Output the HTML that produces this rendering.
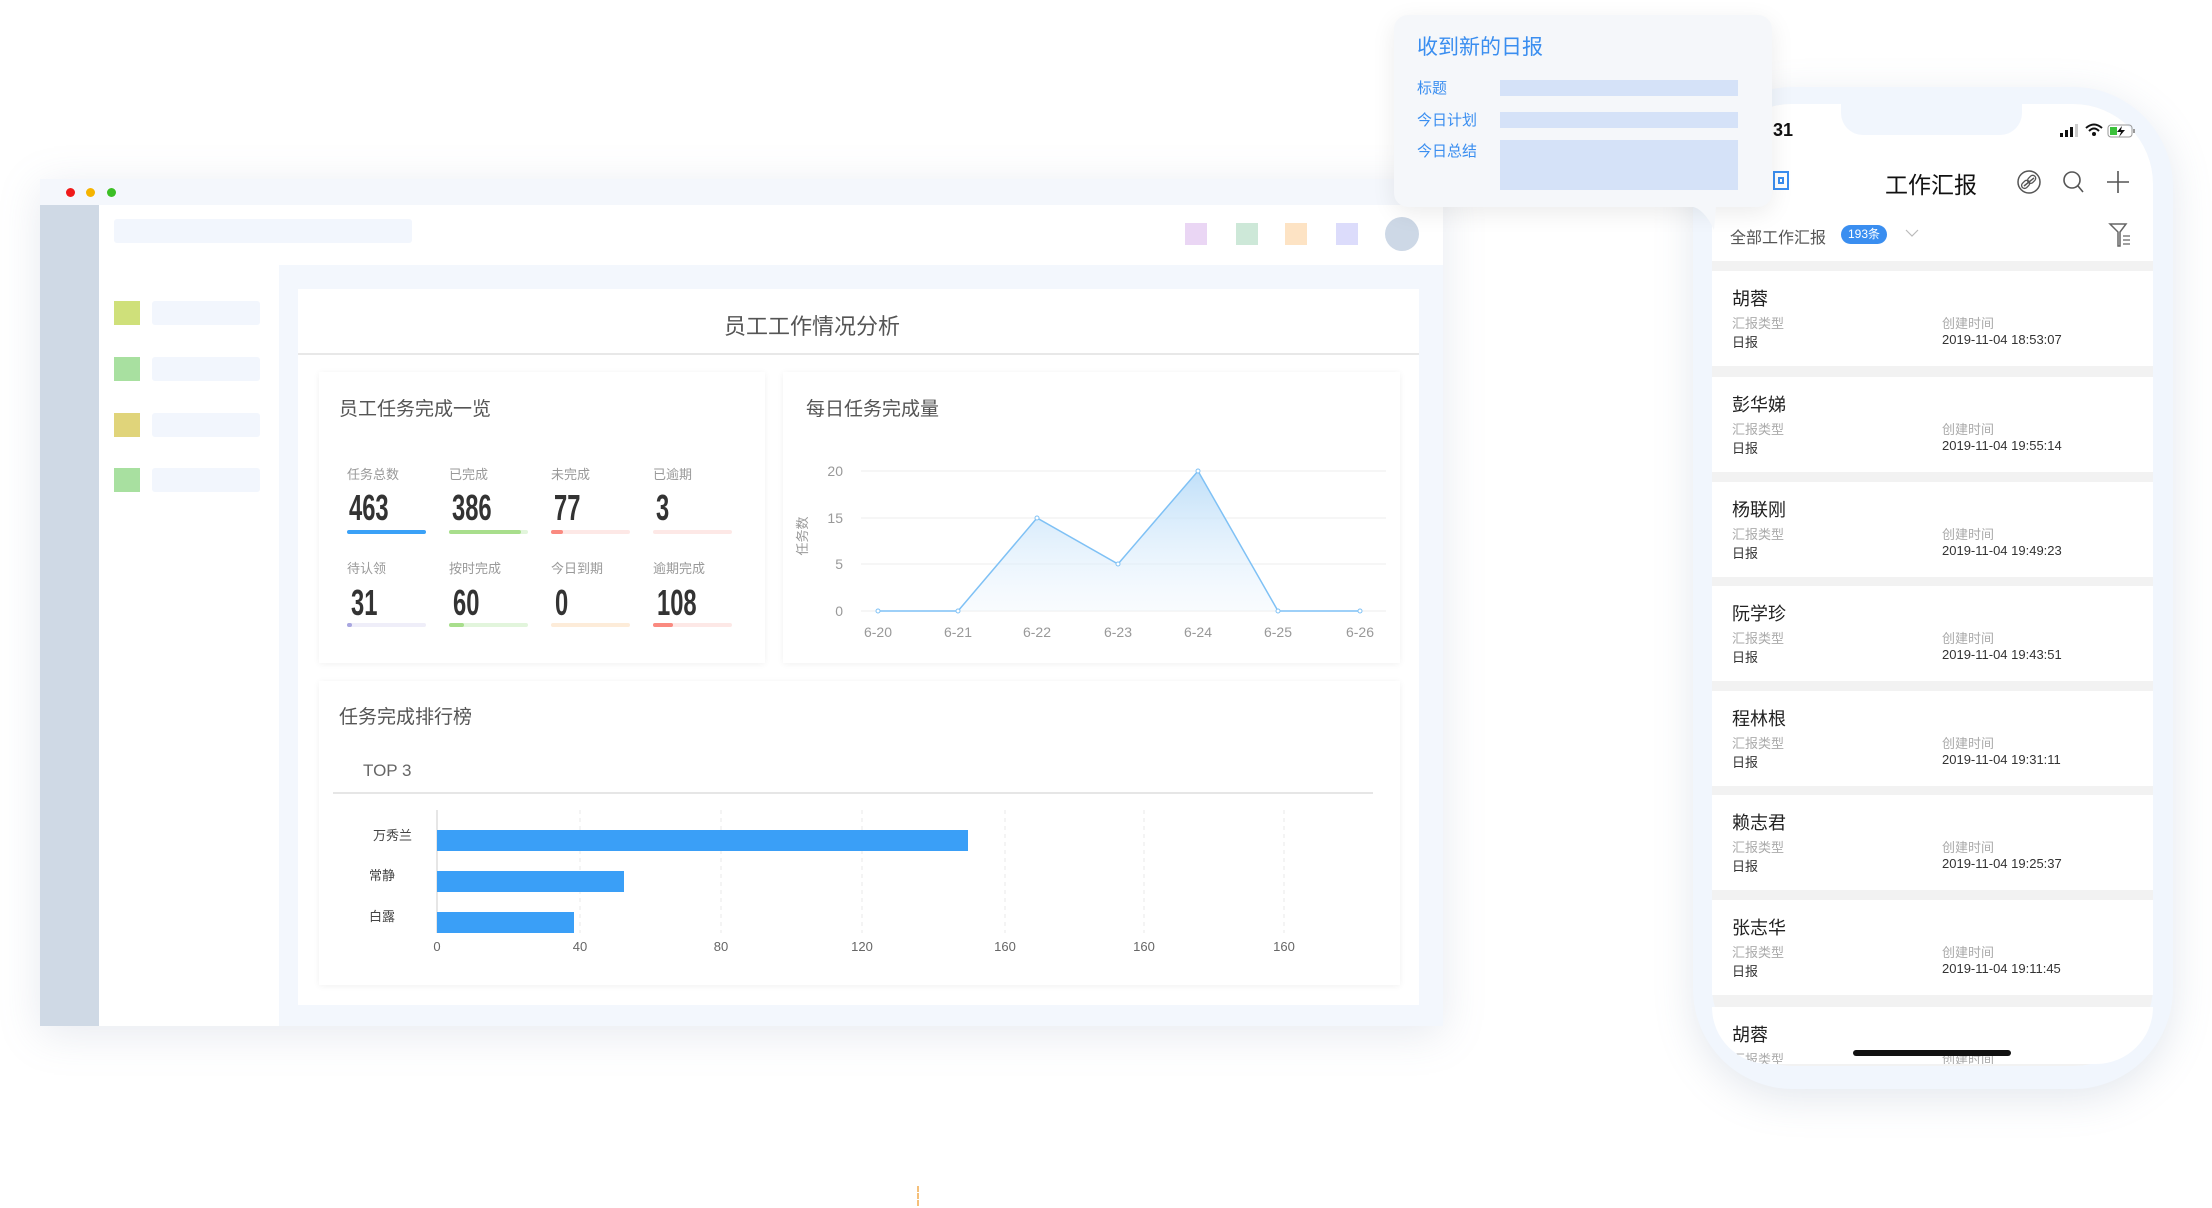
<!DOCTYPE html>
<html><head><meta charset="utf-8"><style>
*{margin:0;padding:0;box-sizing:border-box}
body{width:2212px;height:1208px;background:#fff;position:relative;overflow:hidden;font-family:"Liberation Sans","Noto Sans CJK SC",sans-serif}
.a{position:absolute}
.num{font-family:"Liberation Sans",sans-serif;font-weight:bold;color:#333;font-size:36px;line-height:1;transform:scaleX(0.66);transform-origin:left top}
.lbl{font-size:13px;color:#999}
.bar{height:4px;border-radius:2px}
.card{background:#fff;box-shadow:0 1px 6px rgba(0,0,0,0.06)}
.it{position:absolute;left:1712px;width:441px;height:95px;background:#fff}
.it .n{position:absolute;left:20px;top:14px;font-size:18px;color:#222}
.it .l1{position:absolute;left:20px;top:42px;font-size:13px;color:#aaa}
.it .l2{position:absolute;left:230px;top:42px;font-size:13px;color:#aaa}
.it .v1{position:absolute;left:20px;top:61px;font-size:13px;color:#333}
.it .v2{position:absolute;left:230px;top:61px;font-size:13px;color:#333}
</style></head><body>

<div class="a" style="left:40px;top:179px;width:1403px;height:847px;background:#fff;box-shadow:0 8px 40px rgba(120,140,170,0.18)">
 <div class="a" style="left:0;top:0;width:1403px;height:26px;background:#f4f7fc"></div>
 <div class="a" style="left:26px;top:9px;width:9px;height:9px;border-radius:50%;background:#f01a1a"></div>
 <div class="a" style="left:46px;top:9px;width:9px;height:9px;border-radius:50%;background:#f5b400"></div>
 <div class="a" style="left:67px;top:9px;width:9px;height:9px;border-radius:50%;background:#3cbf25"></div>
 <div class="a" style="left:0;top:26px;width:59px;height:821px;background:#cfd9e5"></div>
 <div class="a" style="left:74px;top:40px;width:298px;height:24px;border-radius:3px;background:#f2f6fd"></div>
 <div class="a" style="left:1145px;top:44px;width:22px;height:22px;background:#ead6f4"></div>
 <div class="a" style="left:1196px;top:44px;width:22px;height:22px;background:#cde8d8"></div>
 <div class="a" style="left:1245px;top:44px;width:22px;height:22px;background:#fde3c4"></div>
 <div class="a" style="left:1296px;top:44px;width:22px;height:22px;background:#dcdcfb"></div>
 <div class="a" style="left:1345px;top:38px;width:34px;height:34px;border-radius:50%;background:#cdd8e6"></div>
 <div class="a" style="left:74px;top:122px;width:26px;height:24px;background:#cfe07a"></div>
 <div class="a" style="left:112px;top:122px;width:108px;height:24px;border-radius:3px;background:#f2f6fd"></div>
 <div class="a" style="left:74px;top:178px;width:26px;height:24px;background:#a8e0a0"></div>
 <div class="a" style="left:112px;top:178px;width:108px;height:24px;border-radius:3px;background:#f2f6fd"></div>
 <div class="a" style="left:74px;top:234px;width:26px;height:24px;background:#e0d47a"></div>
 <div class="a" style="left:112px;top:234px;width:108px;height:24px;border-radius:3px;background:#f2f6fd"></div>
 <div class="a" style="left:74px;top:289px;width:26px;height:24px;background:#a8e0a0"></div>
 <div class="a" style="left:112px;top:289px;width:108px;height:24px;border-radius:3px;background:#f2f6fd"></div>
 <div class="a" style="left:239px;top:86px;width:1164px;height:761px;background:#f3f7fd"></div>
 <div class="a" style="left:258px;top:110px;width:1121px;height:716px;background:#fff"></div>
 <div class="a" style="left:258px;top:174px;width:1121px;height:2px;background:#e8e8e8"></div>
 <div class="a" style="left:684px;top:130px;font-size:22px;color:#555">员工工作情况分析</div>
</div>

<div class="a card" style="left:319px;top:372px;width:446px;height:291px"></div>
<div class="a" style="left:339px;top:394px;font-size:19px;color:#555">员工任务完成一览</div>
<div class="a lbl" style="left:347px;top:464px">任务总数</div>
<div class="a lbl" style="left:449px;top:464px">已完成</div>
<div class="a lbl" style="left:551px;top:464px">未完成</div>
<div class="a lbl" style="left:653px;top:464px">已逾期</div>
<div class="a num" style="left:349px;top:490px">463</div>
<div class="a num" style="left:452px;top:490px">386</div>
<div class="a num" style="left:554px;top:490px">77</div>
<div class="a num" style="left:656px;top:490px">3</div>
<div class="a bar" style="left:347px;top:530px;width:79px;background:#3aa1f7"></div>
<div class="a bar" style="left:449px;top:530px;width:79px;background:#e2f5dc"></div>
<div class="a bar" style="left:449px;top:530px;width:72px;background:#a8de8c"></div>
<div class="a bar" style="left:551px;top:530px;width:79px;background:#fde8e6"></div>
<div class="a bar" style="left:551px;top:530px;width:12px;background:#fa8a80"></div>
<div class="a bar" style="left:653px;top:530px;width:79px;background:#fde8e6"></div>
<div class="a lbl" style="left:347px;top:558px">待认领</div>
<div class="a lbl" style="left:449px;top:558px">按时完成</div>
<div class="a lbl" style="left:551px;top:558px">今日到期</div>
<div class="a lbl" style="left:653px;top:558px">逾期完成</div>
<div class="a num" style="left:351px;top:585px">31</div>
<div class="a num" style="left:453px;top:585px">60</div>
<div class="a num" style="left:555px;top:585px">0</div>
<div class="a num" style="left:657px;top:585px">108</div>
<div class="a bar" style="left:347px;top:623px;width:79px;background:#efeef9"></div>
<div class="a bar" style="left:347px;top:623px;width:5px;background:#a9a7e0"></div>
<div class="a bar" style="left:449px;top:623px;width:79px;background:#e2f5dc"></div>
<div class="a bar" style="left:449px;top:623px;width:15px;background:#a8de8c"></div>
<div class="a bar" style="left:551px;top:623px;width:79px;background:#fdecd9"></div>
<div class="a bar" style="left:653px;top:623px;width:79px;background:#fde8e6"></div>
<div class="a bar" style="left:653px;top:623px;width:20px;background:#fa8a80"></div>

<div class="a card" style="left:783px;top:372px;width:617px;height:291px"></div>
<div class="a" style="left:806px;top:394px;font-size:19px;color:#555">每日任务完成量</div>
<svg class="a" style="left:783px;top:372px" width="617" height="291">
 <defs><linearGradient id="g" x1="0" y1="0" x2="0" y2="1"><stop offset="0" stop-color="#b9dcf8" stop-opacity="0.9"/><stop offset="1" stop-color="#eaf4fd" stop-opacity="0.3"/></linearGradient></defs>
 <g stroke="#eee" stroke-width="1"><line x1="78" y1="99" x2="603" y2="99"/><line x1="78" y1="146" x2="603" y2="146"/><line x1="78" y1="192" x2="603" y2="192"/><line x1="78" y1="239" x2="603" y2="239"/></g>
 <g font-size="14" fill="#999" text-anchor="end"><text x="60" y="104">20</text><text x="60" y="151">15</text><text x="60" y="197">5</text><text x="60" y="244">0</text></g>
 <text x="24" y="164" font-size="13" fill="#999" transform="rotate(-90 24 164)" text-anchor="middle">任务数</text>
 <polygon points="95,239 175,239 254,146 335,192 415,99 495,239 577,239" fill="url(#g)"/>
 <polyline points="95,239 175,239 254,146 335,192 415,99 495,239 577,239" fill="none" stroke="#7fc1f5" stroke-width="1.5"/>
 <g fill="#fff" stroke="#7fc1f5"><circle cx="95" cy="239" r="2"/><circle cx="175" cy="239" r="2"/><circle cx="254" cy="146" r="2"/><circle cx="335" cy="192" r="2"/><circle cx="415" cy="99" r="2"/><circle cx="495" cy="239" r="2"/><circle cx="577" cy="239" r="2"/></g>
 <g font-size="14" fill="#999" text-anchor="middle"><text x="95" y="265">6-20</text><text x="175" y="265">6-21</text><text x="254" y="265">6-22</text><text x="335" y="265">6-23</text><text x="415" y="265">6-24</text><text x="495" y="265">6-25</text><text x="577" y="265">6-26</text></g>
</svg>

<div class="a card" style="left:319px;top:681px;width:1081px;height:304px"></div>
<div class="a" style="left:339px;top:702px;font-size:19px;color:#555">任务完成排行榜</div>
<div class="a" style="left:363px;top:761px;font-size:17px;color:#666">TOP 3</div>
<div class="a" style="left:333px;top:792px;width:1040px;height:2px;background:#e6e6e6"></div>
<svg class="a" style="left:319px;top:800px" width="1081" height="170">
 <g stroke="#e8e8e8" stroke-dasharray="4 4"><line x1="261" y1="10" x2="261" y2="133"/><line x1="402" y1="10" x2="402" y2="133"/><line x1="543" y1="10" x2="543" y2="133"/><line x1="686" y1="10" x2="686" y2="133"/><line x1="825" y1="10" x2="825" y2="133"/><line x1="965" y1="10" x2="965" y2="133"/></g>
 <line x1="118" y1="10" x2="118" y2="133" stroke="#ccc"/>
 <rect x="118" y="30" width="531" height="21" fill="#3a9ff7"/>
 <rect x="118" y="71" width="187" height="21" fill="#3a9ff7"/>
 <rect x="118" y="112" width="137" height="21" fill="#3a9ff7"/>
 <g font-size="13" fill="#444" text-anchor="end"><text x="93" y="40">万秀兰</text><text x="76" y="80">常静</text><text x="76" y="121">白露</text></g>
 <g font-size="13" fill="#666" text-anchor="middle"><text x="118" y="151">0</text><text x="261" y="151">40</text><text x="402" y="151">80</text><text x="543" y="151">120</text><text x="686" y="151">160</text><text x="825" y="151">160</text><text x="965" y="151">160</text></g>
</svg>

<div class="a" style="left:1693px;top:87px;width:480px;height:1002px;border-radius:100px;background:#f1f6fd;box-shadow:0 10px 40px rgba(120,140,170,0.2)"></div>
<div class="a" style="left:1712px;top:104px;width:441px;height:962px;border-radius:80px;background:#f2f2f2;overflow:hidden">
 <div class="a" style="left:0;top:0;width:441px;height:157px;background:#fff"></div>
 <div class="a" style="left:129px;top:0;width:181px;height:31px;background:#f1f6fd;border-radius:0 0 22px 22px"></div>
</div>
<div class="a" style="left:1773px;top:120px;font-size:18px;font-weight:bold;color:#111">31</div>
<svg class="a" style="left:2058px;top:122px" width="82" height="18">
 <rect x="2" y="11" width="3" height="4" fill="#111"/><rect x="7" y="8" width="3" height="7" fill="#111"/><rect x="12" y="5" width="3" height="10" fill="#111"/><rect x="17" y="2" width="3" height="13" fill="#ccc"/>
 <path d="M28 6 Q36 -1 44 6 M31 9 Q36 4 41 9" stroke="#111" stroke-width="2" fill="none"/><circle cx="36" cy="12" r="2" fill="#111"/>
 <rect x="50" y="3" width="24" height="12" rx="3" fill="none" stroke="#999"/><rect x="52" y="5" width="7" height="8" fill="#3cc13b"/><path d="M64 4 L59 10 H63 L61 15 L67 8 H63 Z" fill="#111"/><rect x="75" y="7" width="2" height="4" fill="#999"/>
</svg>
<div class="a" style="left:1773px;top:171px;width:16px;height:19px;border:2px solid #3a8ef0"><div class="a" style="left:3px;top:4px;width:6px;height:7px;border:2px solid #3a8ef0"></div></div>
<div class="a" style="left:1885px;top:166px;font-size:23px;color:#111">工作汇报</div>
<svg class="a" style="left:2015px;top:168px" width="120" height="30">
 <circle cx="14" cy="14" r="11" fill="none" stroke="#555" stroke-width="1.5"/>
 <path d="M9 18 L19 10" stroke="#555" stroke-width="1.5"/><rect x="8" y="12" width="6" height="9" rx="3" transform="rotate(45 11 16)" fill="none" stroke="#555" stroke-width="1.3"/><rect x="14" y="7" width="6" height="9" rx="3" transform="rotate(45 17 11)" fill="none" stroke="#555" stroke-width="1.3"/>
 <circle cx="57" cy="12" r="8" fill="none" stroke="#555" stroke-width="1.6"/><path d="M63 18 L68 24" stroke="#555" stroke-width="1.6"/>
 <path d="M103 3 V25 M92 14 H114" stroke="#555" stroke-width="1.6"/>
</svg>
<div class="a" style="left:1730px;top:224px;font-size:16px;color:#555">全部工作汇报</div>
<div class="a" style="left:1841px;top:225px;width:46px;height:19px;border-radius:10px;background:#3a8ef0;color:#fff;font-size:12px;text-align:center;line-height:19px">193条</div>
<svg class="a" style="left:1905px;top:228px" width="14" height="10"><path d="M1 2 L7 8 L13 2" fill="none" stroke="#bbb" stroke-width="1.2"/></svg>
<svg class="a" style="left:2108px;top:222px" width="26" height="26">
 <path d="M2 2 H18 L12 10 V24 H10 V10 Z" fill="none" stroke="#666" stroke-width="1.5"/><path d="M15 14 H22 M15 18 H22 M15 22 H22" stroke="#666" stroke-width="1.3"/>
</svg>

<div class="it" style="top:271px"><div class="n">胡蓉</div><div class="l1">汇报类型</div><div class="l2">创建时间</div><div class="v1">日报</div><div class="v2">2019-11-04 18:53:07</div></div>
<div class="it" style="top:377px"><div class="n">彭华娣</div><div class="l1">汇报类型</div><div class="l2">创建时间</div><div class="v1">日报</div><div class="v2">2019-11-04 19:55:14</div></div>
<div class="it" style="top:482px"><div class="n">杨联刚</div><div class="l1">汇报类型</div><div class="l2">创建时间</div><div class="v1">日报</div><div class="v2">2019-11-04 19:49:23</div></div>
<div class="it" style="top:586px"><div class="n">阮学珍</div><div class="l1">汇报类型</div><div class="l2">创建时间</div><div class="v1">日报</div><div class="v2">2019-11-04 19:43:51</div></div>
<div class="it" style="top:691px"><div class="n">程林根</div><div class="l1">汇报类型</div><div class="l2">创建时间</div><div class="v1">日报</div><div class="v2">2019-11-04 19:31:11</div></div>
<div class="it" style="top:795px"><div class="n">赖志君</div><div class="l1">汇报类型</div><div class="l2">创建时间</div><div class="v1">日报</div><div class="v2">2019-11-04 19:25:37</div></div>
<div class="it" style="top:900px"><div class="n">张志华</div><div class="l1">汇报类型</div><div class="l2">创建时间</div><div class="v1">日报</div><div class="v2">2019-11-04 19:11:45</div></div>
<div class="it" style="top:1007px;height:57px;border-radius:0 0 60px 60px;overflow:hidden"><div class="n">胡蓉</div><div class="l1">汇报类型</div><div class="l2">创建时间</div></div>
<div class="a" style="left:1853px;top:1050px;width:158px;height:6px;border-radius:3px;background:#111"></div>

<div class="a" style="left:1394px;top:15px;width:378px;height:192px;border-radius:14px;background:#f5f7fa;box-shadow:0 6px 24px rgba(0,0,0,0.08)"></div>
<svg class="a" style="left:1690px;top:200px" width="36" height="34"><path d="M0 6 Q14 8 24 30 L26 6 Z" fill="#f5f7fa"/></svg>
<div class="a" style="left:1417px;top:31px;font-size:21px;color:#3a8ef0">收到新的日报</div>
<div class="a" style="left:1417px;top:77px;font-size:15px;color:#3a8ef0">标题</div>
<div class="a" style="left:1500px;top:80px;width:238px;height:16px;background:#d5e2f8"></div>
<div class="a" style="left:1417px;top:109px;font-size:15px;color:#3a8ef0">今日计划</div>
<div class="a" style="left:1500px;top:112px;width:238px;height:16px;background:#d5e2f8"></div>
<div class="a" style="left:1417px;top:140px;font-size:15px;color:#3a8ef0">今日总结</div>
<div class="a" style="left:1500px;top:140px;width:238px;height:50px;background:#d5e2f8"></div>

<div class="a" style="left:917px;top:1186px;width:2px;height:20px;border-left:2px dashed #f5c07a"></div>
</body></html>
